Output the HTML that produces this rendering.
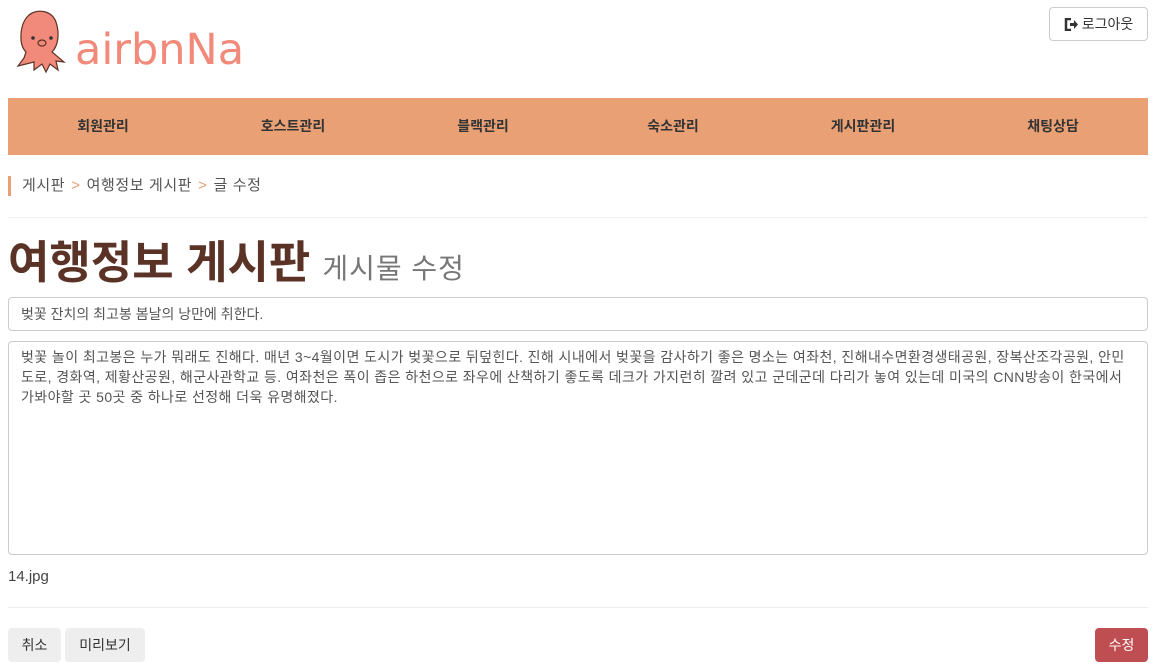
<!DOCTYPE html>
<html><head><meta charset="utf-8"><style>
*{box-sizing:border-box;margin:0;padding:0}
body{width:1156px;height:670px;background:#fff;font-family:"Liberation Sans","Noto Sans CJK KR",sans-serif;color:#333;position:relative;overflow:hidden}
.abs{position:absolute}
.logo{left:14px;top:8px}
.logout{left:1049px;top:7px;width:99px;height:34px;border:1px solid #ccc;border-radius:4px;font-size:14px;color:#333;display:flex;align-items:center;justify-content:center;gap:4px}
.nav{left:8px;top:98px;width:1140px;height:57px;background:#E8A074;display:flex}
.nav div{flex:1;text-align:center;line-height:57px;font-size:14px;font-weight:bold;color:#333}
.bc{left:8px;top:176px;height:20px;border-left:3px solid #E8A074;padding-left:11px;font-size:15px;line-height:20px;color:#555;letter-spacing:.6px}
.bc span{color:#E8A074;margin:0 6px}
.hr{left:8px;width:1140px;height:1px;background:#eee}
.h1{left:8px;top:235px;font-size:45px;font-weight:bold;color:#5a3326;line-height:56px}
.h1 small{font-size:28px;font-weight:normal;color:#777;margin-left:12px;letter-spacing:1px}
.inp{left:8px;top:297px;width:1140px;height:34px;border:1px solid #ccc;border-radius:4px;padding:6px 12px;font-size:14px;line-height:20px;color:#555}
.ta{left:8px;top:341px;width:1140px;height:214px;border:1px solid #ccc;border-radius:4px;padding:5px 12px;font-size:14px;line-height:20px;color:#555;white-space:nowrap;letter-spacing:.42px}
.file{left:8px;top:568px;font-size:15px;color:#444}
.btn{top:628px;height:34px;border-radius:4px;font-size:14px;line-height:34px;text-align:center}
</style></head><body>
<div class="abs logo">
<svg width="240" height="66" viewBox="0 0 240 66">
<path d="M12 44 C4 36 6 16 14 8 C22 0 38 2 42 14 C46 26 44 38 38 44 L50 54 L42 53 L44 62 L36 56 L32 64 L28 56 L20 62 L20 54 L4 58 L10 50 Z" fill="#F18A7A" stroke="#5a3326" stroke-width="1.2"/>
<circle cx="19" cy="30" r="1.8" fill="#333"/><circle cx="37" cy="30" r="1.8" fill="#333"/>
<ellipse cx="28" cy="35" rx="4" ry="3" fill="none" stroke="#5a3326" stroke-width="1.2"/>
<text x="61" y="56" font-family="DejaVu Sans,sans-serif" font-size="43" fill="#F18A7A">airbnNa</text>
</svg></div>
<div class="abs logout"><svg width="14" height="13" viewBox="0 0 14 13"><path d="M7 1H2v11h5" fill="none" stroke="#333" stroke-width="2.5"/><path d="M6 5h4V2l4 4.5-4 4.5V8H6z" fill="#333"/></svg>로그아웃</div>
<div class="abs nav"><div>회원관리</div><div>호스트관리</div><div>블랙관리</div><div>숙소관리</div><div>게시판관리</div><div>채팅상담</div></div>
<div class="abs bc">게시판<span>&gt;</span>여행정보 게시판<span>&gt;</span>글 수정</div>
<div class="abs hr" style="top:217px"></div>
<div class="abs h1">여행정보 게시판<small>게시물 수정</small></div>
<div class="abs inp">벚꽃 잔치의 최고봉 봄날의 낭만에 취한다.</div>
<div class="abs ta">벚꽃 놀이 최고봉은 누가 뭐래도 진해다. 매년 3~4월이면 도시가 벚꽃으로 뒤덮힌다. 진해 시내에서 벚꽃을 감사하기 좋은 명소는 여좌천, 진해내수면환경생태공원, 장복산조각공원, 안민<br>도로, 경화역, 제황산공원, 해군사관학교 등. 여좌천은 폭이 좁은 하천으로 좌우에 산책하기 좋도록 데크가 가지런히 깔려 있고 군데군데 다리가 놓여 있는데 미국의 CNN방송이 한국에서<br>가봐야할 곳 50곳 중 하나로 선정해 더욱 유명해졌다.</div>
<div class="abs file">14.jpg</div>
<div class="abs hr" style="top:607px"></div>
<div class="abs btn" style="left:8px;width:53px;background:#eee;color:#333">취소</div>
<div class="abs btn" style="left:65px;width:80px;background:#eee;color:#333">미리보기</div>
<div class="abs btn" style="left:1095px;width:53px;background:#BF4E52;color:#fff">수정</div>
</body></html>
